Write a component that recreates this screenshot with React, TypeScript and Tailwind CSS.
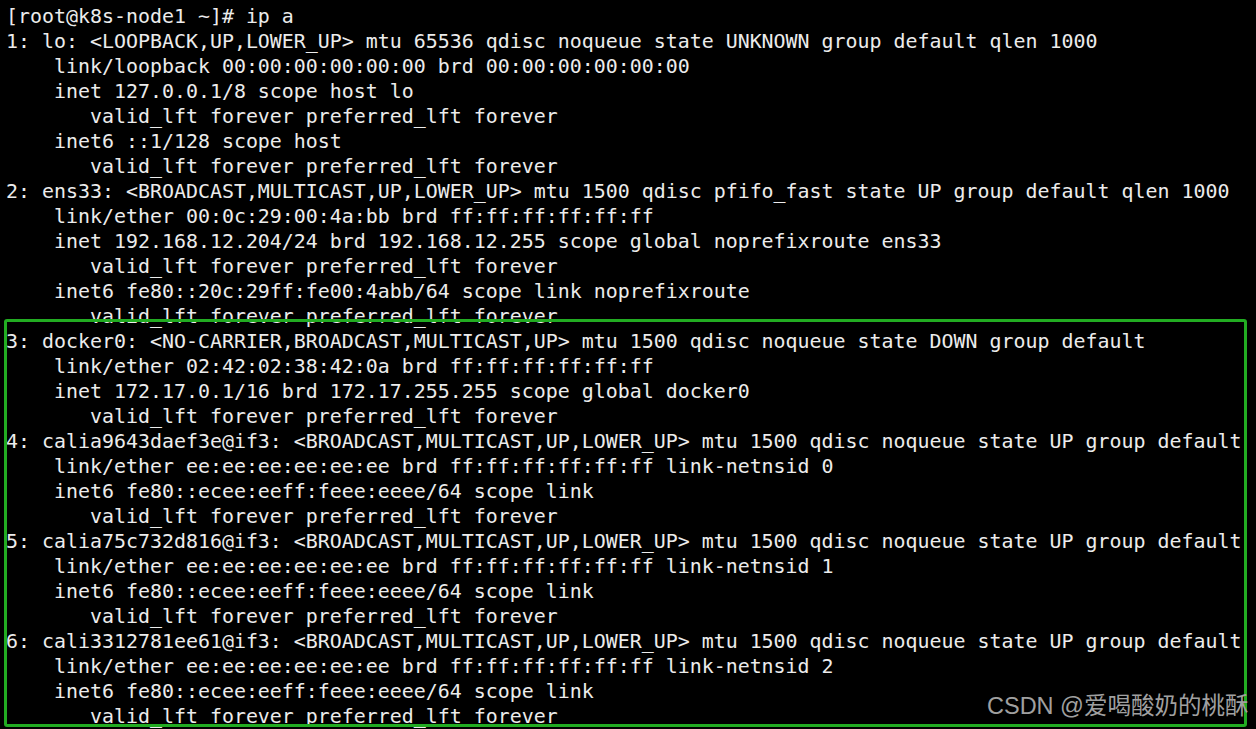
const lines = [
  "[root@k8s-node1 ~]# ip a",
  "1: lo: <LOOPBACK,UP,LOWER_UP> mtu 65536 qdisc noqueue state UNKNOWN group default qlen 1000",
  "    link/loopback 00:00:00:00:00:00 brd 00:00:00:00:00:00",
  "    inet 127.0.0.1/8 scope host lo",
  "       valid_lft forever preferred_lft forever",
  "    inet6 ::1/128 scope host",
  "       valid_lft forever preferred_lft forever",
  "2: ens33: <BROADCAST,MULTICAST,UP,LOWER_UP> mtu 1500 qdisc pfifo_fast state UP group default qlen 1000",
  "    link/ether 00:0c:29:00:4a:bb brd ff:ff:ff:ff:ff:ff",
  "    inet 192.168.12.204/24 brd 192.168.12.255 scope global noprefixroute ens33",
  "       valid_lft forever preferred_lft forever",
  "    inet6 fe80::20c:29ff:fe00:4abb/64 scope link noprefixroute",
  "       valid_lft forever preferred_lft forever",
  "3: docker0: <NO-CARRIER,BROADCAST,MULTICAST,UP> mtu 1500 qdisc noqueue state DOWN group default",
  "    link/ether 02:42:02:38:42:0a brd ff:ff:ff:ff:ff:ff",
  "    inet 172.17.0.1/16 brd 172.17.255.255 scope global docker0",
  "       valid_lft forever preferred_lft forever",
  "4: calia9643daef3e@if3: <BROADCAST,MULTICAST,UP,LOWER_UP> mtu 1500 qdisc noqueue state UP group default",
  "    link/ether ee:ee:ee:ee:ee:ee brd ff:ff:ff:ff:ff:ff link-netnsid 0",
  "    inet6 fe80::ecee:eeff:feee:eeee/64 scope link",
  "       valid_lft forever preferred_lft forever",
  "5: calia75c732d816@if3: <BROADCAST,MULTICAST,UP,LOWER_UP> mtu 1500 qdisc noqueue state UP group default",
  "    link/ether ee:ee:ee:ee:ee:ee brd ff:ff:ff:ff:ff:ff link-netnsid 1",
  "    inet6 fe80::ecee:eeff:feee:eeee/64 scope link",
  "       valid_lft forever preferred_lft forever",
  "6: cali3312781ee61@if3: <BROADCAST,MULTICAST,UP,LOWER_UP> mtu 1500 qdisc noqueue state UP group default",
  "    link/ether ee:ee:ee:ee:ee:ee brd ff:ff:ff:ff:ff:ff link-netnsid 2",
  "    inet6 fe80::ecee:eeff:feee:eeee/64 scope link",
  "       valid_lft forever preferred_lft forever",
];

export default function App() {
  return (
    <div className="relative h-[729px] w-[1256px] overflow-hidden bg-black">
      <pre className="whitespace-pre pl-[6px] pt-[4px] font-['DejaVu_Sans_Mono',monospace] text-[19.93px] leading-[25px] text-[#ececec]">
        {lines.map((l, i) => (
          <div key={i} className="h-[25px]">
            {l}
          </div>
        ))}
      </pre>

      {/* highlight box */}
      <div className="pointer-events-none absolute left-[4px] top-[319px] h-[408px] w-[1243px] rounded-[3px] border-[3px] border-[#22ac22]" />

      <span className="absolute left-[987px] top-[692px] whitespace-nowrap font-['Liberation_Sans','Noto_Sans_CJK_SC',sans-serif] text-[23.5px] leading-[28px] text-[#a0a0a0]">
        CSDN @爱喝酸奶的桃酥
      </span>
    </div>
  );
}
